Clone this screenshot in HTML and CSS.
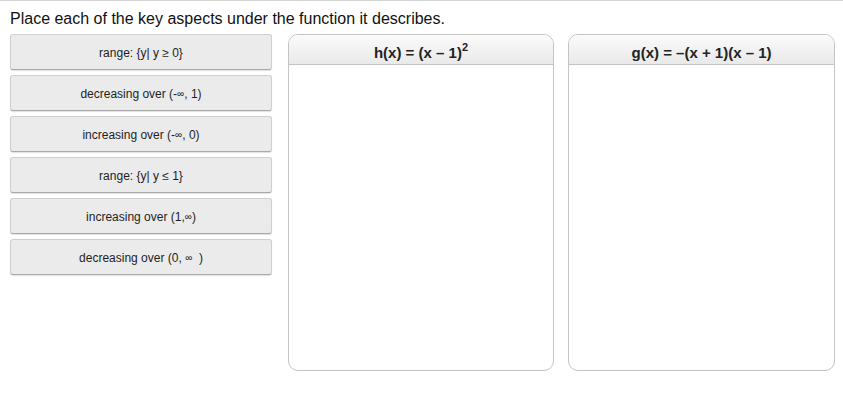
FILE: index.html
```html
<!DOCTYPE html>
<html>
<head>
<meta charset="utf-8">
<link rel="stylesheet" href="styles.css">
</head>
<body>
<div class="page">
  <div class="prompt">Place each of the key aspects under the function it describes.</div>
  <div class="workspace">
    <div class="tiles">
      <div class="tile">range: {y| y ≥ 0}</div>
      <div class="tile">decreasing over (-<span class="inf">∞</span>, 1)</div>
      <div class="tile">increasing over (-<span class="inf">∞</span>, 0)</div>
      <div class="tile">range: {y| y ≤ 1}</div>
      <div class="tile">increasing over (1,<span class="inf">∞</span>)</div>
      <div class="tile">decreasing over (0,&nbsp;<span class="inf">∞</span>&nbsp;&nbsp;)</div>
    </div>
    <div class="panel">
      <div class="panel-head">h(x) = (x – 1)<sup>2</sup></div>
      <div class="panel-body"></div>
    </div>
    <div class="panel panel-wide">
      <div class="panel-head">g(x) = –(x + 1)(x – 1)</div>
      <div class="panel-body"></div>
    </div>
  </div>
</div>
</body>
</html>
```
FILE: styles.css
```css
html, body {
  margin: 0;
  padding: 0;
  background: #ffffff;
}
body {
  font-family: "Liberation Sans", Arial, sans-serif;
  color: #222222;
}
.page {
  border-top: 1px solid #d4d4d4;
  width: 843px;
  height: 404px;
}
.prompt {
  padding: 9px 0 0 10px;
  font-size: 16px;
  line-height: 18px;
  color: #111111;
}
.workspace {
  display: flex;
  align-items: flex-start;
  margin-top: 6px;
  padding-left: 10px;
}
.tiles {
  width: 262px;
  display: flex;
  flex-direction: column;
  gap: 5px;
}
.tile {
  box-sizing: border-box;
  height: 36px;
  padding-top: 1px;
  border: 1px solid #cfcfcf;
  border-bottom-color: #a9a9a9;
  border-radius: 3px;
  background: #ebebeb;
  box-shadow: 0 1px 1px rgba(0, 0, 0, 0.12);
  display: flex;
  align-items: center;
  justify-content: center;
  font-size: 12px;
  color: #1e1e1e;
}
.inf {
  font-size: 10px;
}
.panel {
  width: 266px;
  height: 337px;
  box-sizing: border-box;
  margin-left: 16px;
  border: 1px solid #c4c4c4;
  border-radius: 10px;
  display: flex;
  flex-direction: column;
  overflow: hidden;
  background: #ffffff;
}
.panel-wide {
  margin-left: 14px;
  width: 267px;
}
.panel-head {
  height: 30px;
  box-sizing: border-box;
  border-bottom: 1px solid #c4c4c4;
  background: linear-gradient(#fbfbfb, #e9e9e9);
  text-align: center;
  font-weight: bold;
  font-size: 15px;
  line-height: 17px;
  padding-top: 9px;
  color: #222222;
}
.panel-head sup {
  font-size: 11px;
  line-height: 0;
  position: relative;
  top: -1px;
}
.panel-body {
  flex: 1;
}
```
